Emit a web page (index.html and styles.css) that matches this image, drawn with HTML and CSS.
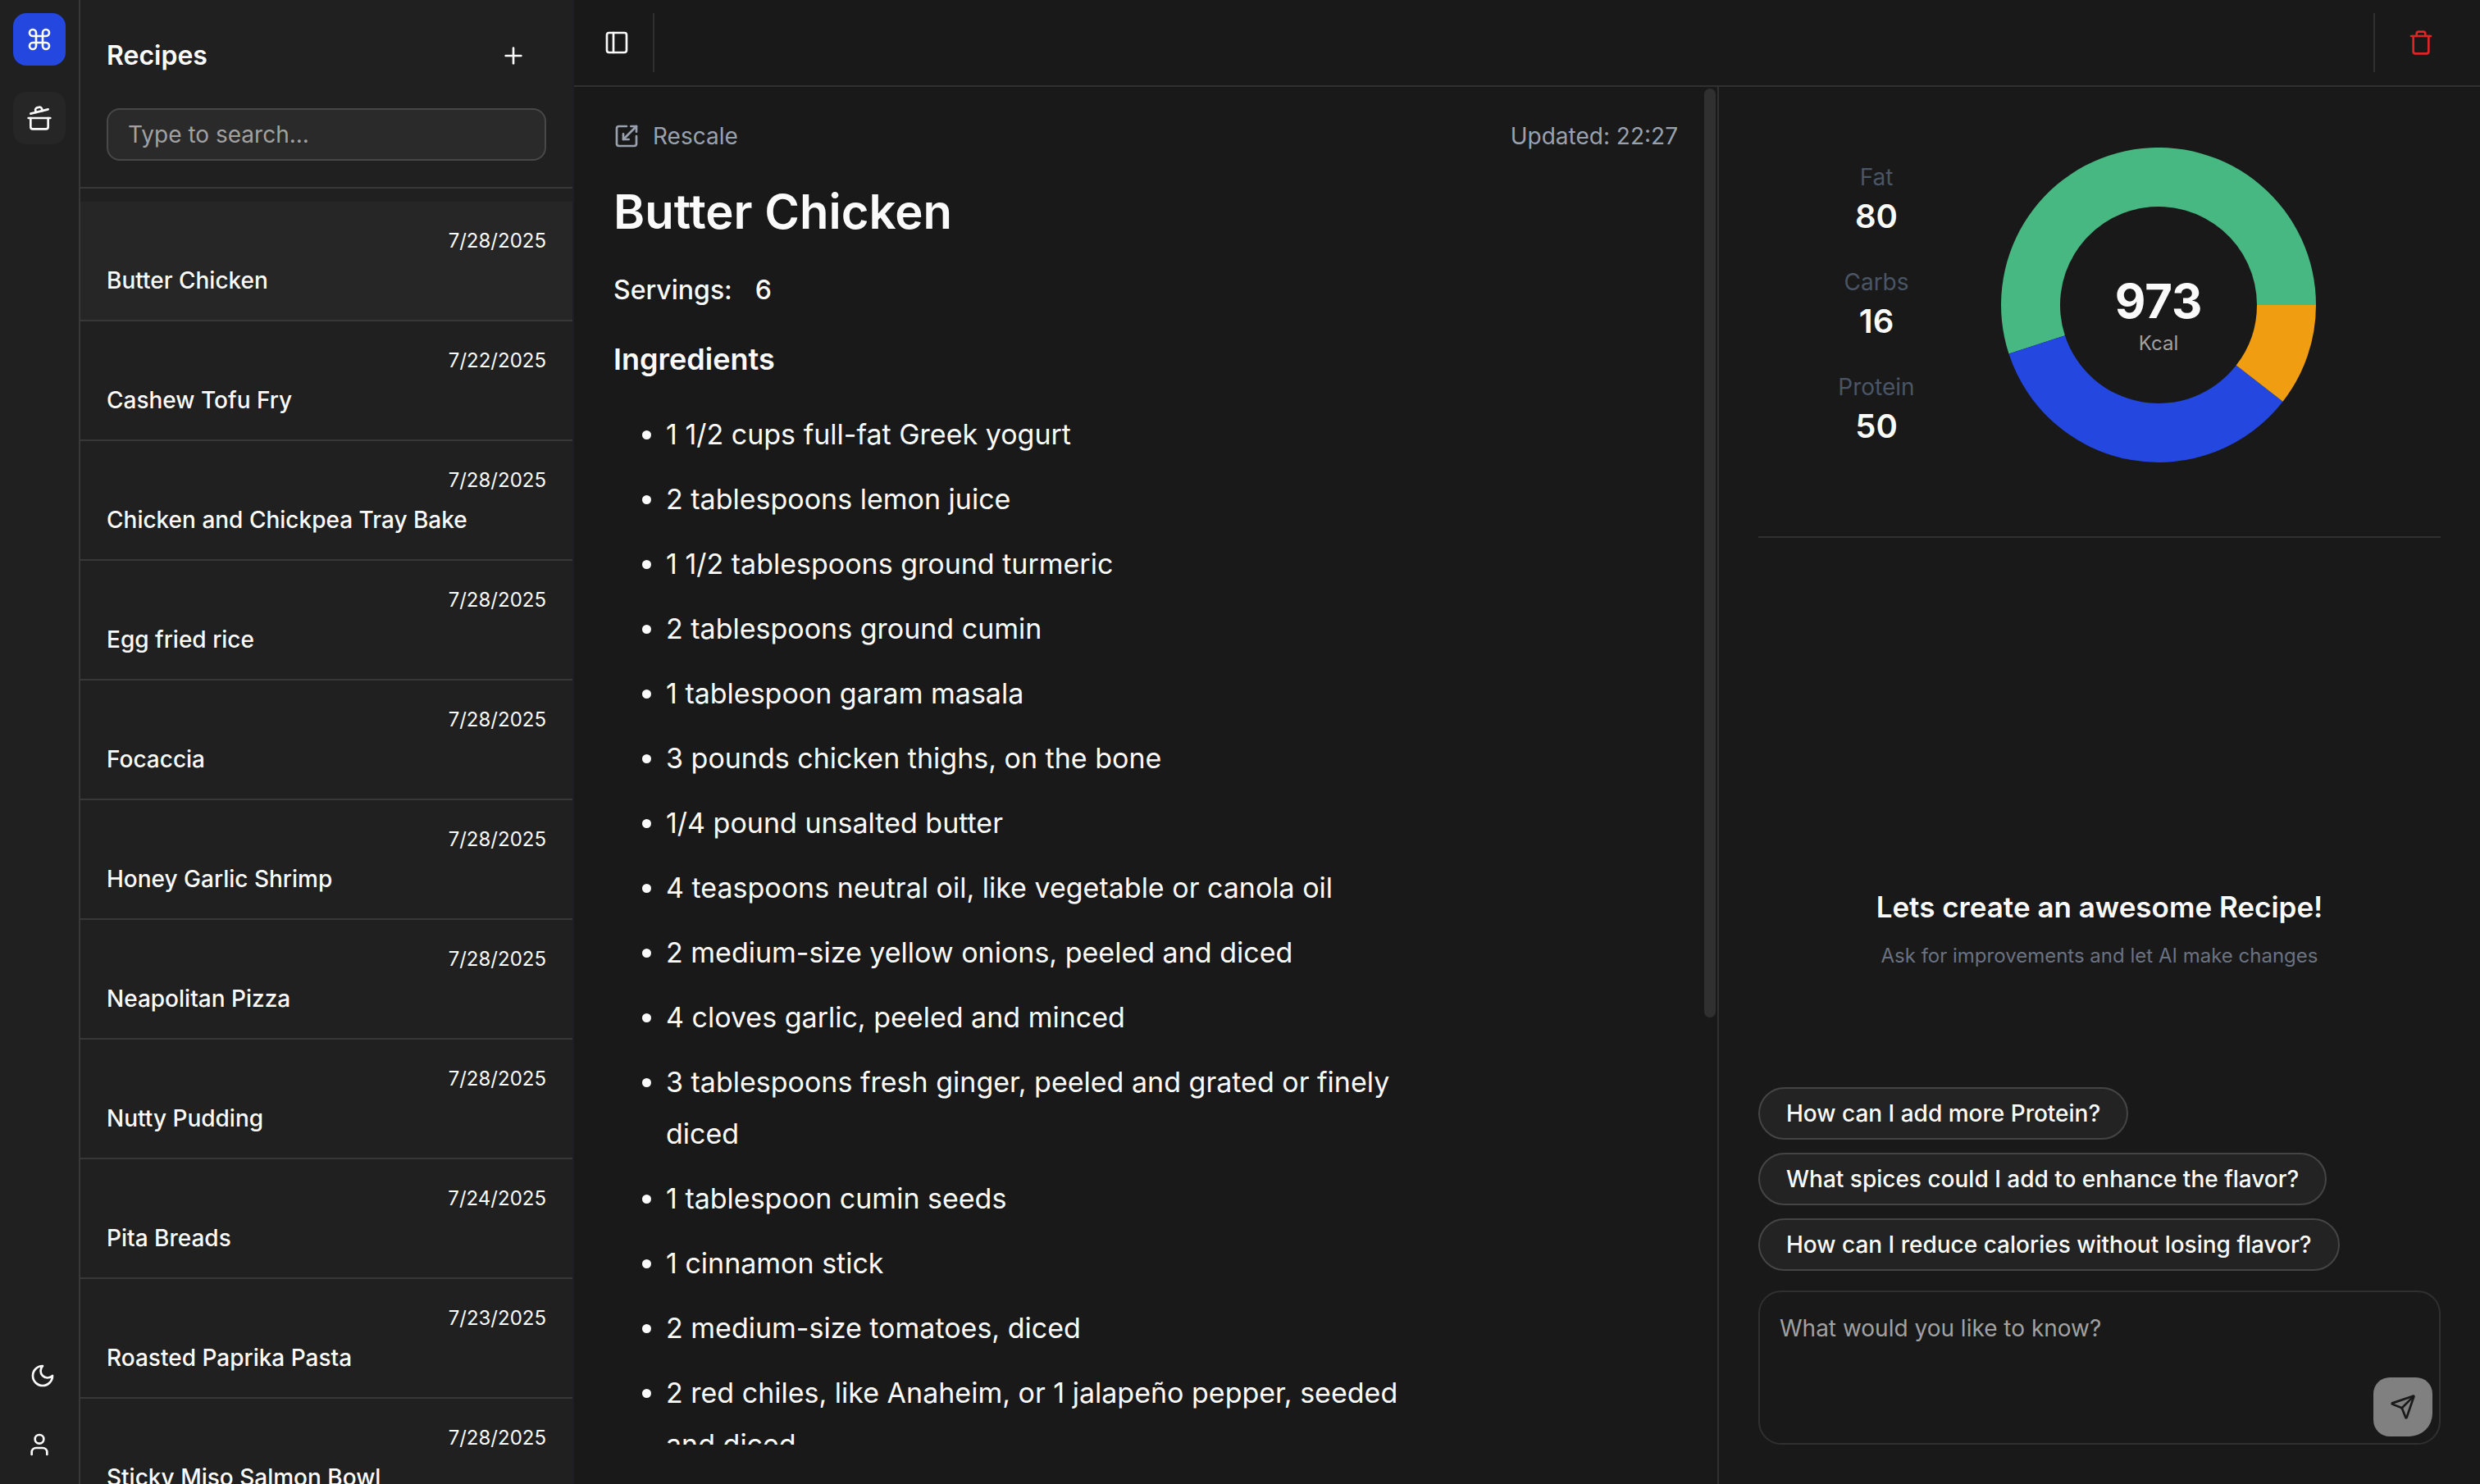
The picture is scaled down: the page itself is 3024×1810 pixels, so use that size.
FILE: index.html
```html
<!DOCTYPE html>
<html lang="en">
<head>
<meta charset="utf-8">
<title>Recipes</title>
<link rel="stylesheet" href="styles.css">
</head>
<body>
<div class="app">
  <nav class="rail" aria-label="Main">
    <a class="rail-logo" href="#" aria-label="Home">
      <svg class="icon" viewBox="0 0 24 24"><path d="M15 6v12a3 3 0 1 0 3-3H6a3 3 0 1 0 3 3V6a3 3 0 1 0-3 3h12a3 3 0 1 0-3-3"/></svg>
    </a>
    <a class="rail-link" href="#" aria-label="Recipes">
      <svg class="icon" viewBox="0 0 24 24"><path d="M2 12h20"/><path d="M20 12v8a2 2 0 0 1-2 2H6a2 2 0 0 1-2-2v-8"/><path d="m4 8 16-4"/><path d="m8.86 6.78-.45-1.81a2 2 0 0 1 1.45-2.43l1.94-.48a2 2 0 0 1 2.43 1.46l.45 1.8"/></svg>
    </a>
    <div class="rail-footer">
      <button class="rail-button rail-theme" type="button" aria-label="Toggle theme">
        <svg class="icon" viewBox="0 0 24 24"><path d="M12 3a6 6 0 0 0 9 9 9 9 0 1 1-9-9Z"/></svg>
      </button>
      <button class="rail-button" type="button" aria-label="Account">
        <svg class="icon" viewBox="0 0 24 24"><path d="M19 21v-2a4 4 0 0 0-4-4H9a4 4 0 0 0-4 4v2"/><circle cx="12" cy="7" r="4"/></svg>
      </button>
    </div>
  </nav>

  <aside class="sidebar">
    <header class="sidebar-header">
      <div class="sidebar-title-row">
        <h2 class="sidebar-title">Recipes</h2>
        <button class="icon-button" type="button" aria-label="New recipe">
          <svg class="icon" viewBox="0 0 24 24"><path d="M5 12h14"/><path d="M12 5v14"/></svg>
        </button>
      </div>
      <input class="search" type="search" placeholder="Type to search..." aria-label="Search recipes">
    </header>
    <div class="recipe-list">
      <a class="recipe recipe-active" href="#"><time class="recipe-date">7/28/2025</time><span class="recipe-name">Butter Chicken</span></a>
      <a class="recipe" href="#"><time class="recipe-date">7/22/2025</time><span class="recipe-name">Cashew Tofu Fry</span></a>
      <a class="recipe" href="#"><time class="recipe-date">7/28/2025</time><span class="recipe-name">Chicken and Chickpea Tray Bake</span></a>
      <a class="recipe" href="#"><time class="recipe-date">7/28/2025</time><span class="recipe-name">Egg fried rice</span></a>
      <a class="recipe" href="#"><time class="recipe-date">7/28/2025</time><span class="recipe-name">Focaccia</span></a>
      <a class="recipe" href="#"><time class="recipe-date">7/28/2025</time><span class="recipe-name">Honey Garlic Shrimp</span></a>
      <a class="recipe" href="#"><time class="recipe-date">7/28/2025</time><span class="recipe-name">Neapolitan Pizza</span></a>
      <a class="recipe" href="#"><time class="recipe-date">7/28/2025</time><span class="recipe-name">Nutty Pudding</span></a>
      <a class="recipe" href="#"><time class="recipe-date">7/24/2025</time><span class="recipe-name">Pita Breads</span></a>
      <a class="recipe" href="#"><time class="recipe-date">7/23/2025</time><span class="recipe-name">Roasted Paprika Pasta</span></a>
      <a class="recipe" href="#"><time class="recipe-date">7/28/2025</time><span class="recipe-name">Sticky Miso Salmon Bowl</span></a>
    </div>
  </aside>

  <div class="workspace">
    <header class="topbar">
      <button class="icon-button" type="button" aria-label="Toggle sidebar">
        <svg class="icon" viewBox="0 0 24 24"><rect width="18" height="18" x="3" y="3" rx="2"/><path d="M9 3v18"/></svg>
      </button>
      <div class="divider"></div>
      <div class="divider divider-end"></div>
      <button class="icon-button icon-button-danger" type="button" aria-label="Delete recipe">
        <svg class="icon" viewBox="0 0 24 24"><path d="M19 6v14a2 2 0 0 1-2 2H7a2 2 0 0 1-2-2V6"/><path d="M3 6h18"/><path d="M8 6V4a2 2 0 0 1 2-2h4a2 2 0 0 1 2 2v2"/></svg>
      </button>
    </header>

    <div class="panes">
      <main class="recipe-pane">
        <article class="recipe-body">
          <div class="meta">
            <button class="rescale" type="button">
              <svg class="icon" viewBox="0 0 24 24"><path d="M12 3H5a2 2 0 0 0-2 2v14a2 2 0 0 0 2 2h14a2 2 0 0 0 2-2v-7"/><path d="M14 15H9v-5"/><path d="M16 3h5v5"/><path d="M21 3 9 15"/></svg>
              Rescale
            </button>
            <span>Updated: 22:27</span>
          </div>
          <h1 class="title">Butter Chicken</h1>
          <p class="servings"><span>Servings:</span><span>6</span></p>
          <h3 class="section-title">Ingredients</h3>
          <ul class="ingredients">
            <li>1 1/2 cups full-fat Greek yogurt</li>
            <li>2 tablespoons lemon juice</li>
            <li>1 1/2 tablespoons ground turmeric</li>
            <li>2 tablespoons ground cumin</li>
            <li>1 tablespoon garam masala</li>
            <li>3 pounds chicken thighs, on the bone</li>
            <li>1/4 pound unsalted butter</li>
            <li>4 teaspoons neutral oil, like vegetable or canola oil</li>
            <li>2 medium-size yellow onions, peeled and diced</li>
            <li>4 cloves garlic, peeled and minced</li>
            <li>3 tablespoons fresh ginger, peeled and grated or finely diced</li>
            <li>1 tablespoon cumin seeds</li>
            <li>1 cinnamon stick</li>
            <li>2 medium-size tomatoes, diced</li>
            <li>2 red chiles, like Anaheim, or 1 jalapeño pepper, seeded and diced</li>
          </ul>
        </article>
        <div class="scrollbar"><div class="scrollbar-thumb"></div></div>
      </main>

      <aside class="assistant">
        <section class="nutrition">
          <dl class="macros">
            <div class="macro"><dt>Fat</dt><dd>80</dd></div>
            <div class="macro"><dt>Carbs</dt><dd>16</dd></div>
            <div class="macro"><dt>Protein</dt><dd>50</dd></div>
          </dl>
          <svg class="donut" viewBox="-192 -192 384 384" role="img" aria-label="Macronutrient split">
            <path class="slice-fat" d="M192 0A192 192 0 1 0 -182.5 59.6L-114.1 37.2A120 120 0 1 1 120 0Z"/>
            <path class="slice-protein" d="M-182.5 59.6A192 192 0 0 0 151.6 117.8L94.7 73.6A120 120 0 0 1 -114.1 37.2Z"/>
            <path class="slice-carbs" d="M151.6 117.8A192 192 0 0 0 192 0L120 0A120 120 0 0 1 94.7 73.6Z"/>
            <text class="donut-value" x="0" y="16">973</text>
            <text class="donut-unit" x="0" y="55">Kcal</text>
          </svg>
        </section>
        <section class="chat-empty">
          <h2 class="chat-title">Lets create an awesome Recipe!</h2>
          <p class="chat-hint">Ask for improvements and let AI make changes</p>
        </section>
        <div class="suggestions">
          <button class="suggestion" type="button">How can I add more Protein?</button>
          <button class="suggestion" type="button">What spices could I add to enhance the flavor?</button>
          <button class="suggestion" type="button">How can I reduce calories without losing flavor?</button>
        </div>
        <form class="composer">
          <textarea class="composer-input" placeholder="What would you like to know?" aria-label="Message"></textarea>
          <button class="send" type="button" aria-label="Send">
            <svg class="icon" viewBox="0 0 24 24"><path d="M14.536 21.686a.5.5 0 0 0 .937-.024l6.5-19a.496.496 0 0 0-.635-.635l-19 6.5a.5.5 0 0 0-.024.937l7.93 3.18a2 2 0 0 1 1.112 1.11z"/><path d="m21.854 2.147-10.94 10.939"/></svg>
          </button>
        </form>
      </aside>
    </div>
  </div>
</div>
</body>
</html>
```
FILE: styles.css
```css
:root {
  --bg: #191919;
  --sidebar: #202020;
  --accent: #262626;
  --border: #303030;
  --sidebar-border: #383838;
  --text: #fafafa;
  --muted: #a1a1a1;
  --gray: #99a1af;
  --gray-dark: #4a5565;
}

*,
*::before,
*::after {
  box-sizing: border-box;
}

body,
h1,
h2,
h3,
p,
ul,
dl,
dd {
  margin: 0;
}

body {
  background: var(--bg);
  color: var(--text);
  font-family: Inter, "Liberation Sans", sans-serif;
  font-size: 28px;
  line-height: 40px;
}

button,
input,
textarea {
  font: inherit;
  color: inherit;
  border: 0;
  padding: 0;
  background: none;
}

a {
  color: inherit;
  text-decoration: none;
}

.app {
  display: flex;
  height: 100vh;
  overflow: hidden;
}

.icon {
  display: block;
  flex: none;
  width: 32px;
  height: 32px;
  fill: none;
  stroke: currentColor;
  stroke-width: 2;
  stroke-linecap: round;
  stroke-linejoin: round;
}

.icon-button {
  display: grid;
  place-items: center;
  width: 56px;
  height: 56px;
}

.icon-button-danger {
  color: #dc2626;
}

/* Icon rail */

.rail {
  flex: none;
  display: flex;
  flex-direction: column;
  gap: 32px;
  width: 98px;
  padding: 16px;
  background: var(--sidebar);
  border-right: 2px solid var(--sidebar-border);
}

.rail-logo,
.rail-link,
.rail-button {
  display: grid;
  place-items: center;
  width: 64px;
  height: 64px;
  border-radius: 16px;
}

.rail-logo {
  background: #2347df;
}

.rail-link {
  background: var(--accent);
}

.rail-footer {
  display: flex;
  flex-direction: column;
  gap: 20px;
  margin-top: auto;
}

.rail-theme {
  width: 72px;
}

/* Recipe list */

.sidebar {
  flex: none;
  display: flex;
  flex-direction: column;
  width: 602px;
  background: var(--sidebar);
  border-right: 2px solid #1c1d28;
  overflow: hidden;
}

.sidebar-header {
  flex: none;
  display: flex;
  flex-direction: column;
  gap: 28px;
  padding: 32px;
  border-bottom: 2px solid var(--sidebar-border);
}

.sidebar-title-row {
  display: flex;
  align-items: center;
  justify-content: space-between;
  height: 72px;
  padding-right: 12px;
}

.sidebar-title {
  font-size: 32px;
  font-weight: 600;
}

.search {
  width: 100%;
  height: 64px;
  padding: 0 24px;
  background: #2a2a2a;
  border: 2px solid #484848;
  border-radius: 16px;
}

.search::placeholder,
.composer-input::placeholder {
  color: var(--muted);
  opacity: 1;
}

.recipe-list {
  padding-top: 16px;
}

.recipe {
  display: flex;
  flex-direction: column;
  gap: 16px;
  padding: 32px;
  line-height: 32px;
  border-bottom: 2px solid var(--sidebar-border);
}

.recipe-active {
  background: var(--accent);
}

.recipe-date {
  align-self: flex-end;
  font-size: 24px;
}

.recipe-name {
  font-weight: 500;
}

/* Workspace */

.workspace {
  flex: 1;
  display: flex;
  flex-direction: column;
  min-width: 0;
}

.topbar {
  flex: none;
  display: flex;
  align-items: center;
  gap: 16px;
  height: 106px;
  padding: 16px 44px 16px 24px;
  border-bottom: 2px solid var(--border);
}

.divider {
  align-self: stretch;
  width: 2px;
  background: var(--border);
}

.divider-end {
  margin-left: auto;
  margin-right: 12px;
}

.panes {
  flex: 1;
  display: grid;
  grid-template-columns: 1fr 928px;
  min-height: 0;
}

.recipe-pane {
  position: relative;
  display: flex;
  min-width: 0;
  min-height: 0;
  border-right: 2px solid var(--border);
}

.recipe-body {
  flex: 1;
  margin: 0 48px 48px;
  padding-top: 40px;
  overflow: hidden;
}

/* Overlay scrollbar on the right edge of the recipe */
.scrollbar {
  position: absolute;
  top: 0;
  right: 0;
  bottom: 0;
  padding: 2px;
}

.scrollbar-thumb {
  width: 14px;
  height: calc(200% / 3);
  border-radius: 7px;
  background: #303030;
}

.meta {
  display: flex;
  justify-content: space-between;
  color: var(--gray);
}

.rescale {
  display: flex;
  align-items: center;
  gap: 16px;
}

.title {
  margin-top: 36px;
  font-size: 58px;
  line-height: 72px;
  font-weight: 600;
}

.servings {
  display: flex;
  gap: 28px;
  margin-top: 40px;
  font-size: 32px;
  font-weight: 500;
}

.section-title {
  margin-top: 40px;
  font-size: 36px;
  line-height: 48px;
  font-weight: 600;
}

.ingredients {
  display: grid;
  gap: 16px;
  max-width: 1000px;
  margin-top: 36px;
  padding-left: 64px;
  font-size: 34px;
  line-height: 63px;
}

/* Assistant */

.assistant {
  display: flex;
  flex-direction: column;
  min-width: 0;
  padding: 0 48px 48px;
}

.nutrition {
  display: grid;
  grid-template-columns: 288px 400px;
  align-items: center;
  height: 550px;
  padding-bottom: 16px;
  border-bottom: 2px solid var(--border);
}

.macros {
  display: flex;
  flex-direction: column;
  gap: 32px;
  text-align: center;
}

.macro dt {
  color: var(--gray-dark);
}

.macro dd {
  font-size: 40px;
  line-height: 56px;
  font-weight: 600;
}

.donut {
  justify-self: center;
  width: 384px;
  height: 384px;
}

.slice-fat {
  fill: #47b881;
}

.slice-protein {
  fill: #2347df;
}

.slice-carbs {
  fill: #f09d11;
}

.donut-value,
.donut-unit {
  text-anchor: middle;
}

.donut-value {
  fill: var(--text);
  font-size: 58px;
  font-weight: 700;
}

.donut-unit {
  fill: var(--muted);
  font-size: 24px;
}

.chat-empty {
  flex: 1;
  display: flex;
  flex-direction: column;
  justify-content: flex-end;
  gap: 12px;
  padding-bottom: 140px;
  text-align: center;
}

.chat-title {
  font-size: 35px;
  line-height: 56px;
  font-weight: 600;
}

.chat-hint {
  font-size: 24px;
  line-height: 40px;
  color: #6a7282;
}

.suggestions {
  display: flex;
  flex-direction: column;
  align-items: flex-start;
  gap: 16px;
}

.suggestion {
  height: 64px;
  padding: 0 32px;
  background: #232323;
  border: 2px solid #454545;
  border-radius: 32px;
  font-weight: 500;
}

.composer {
  display: flex;
  align-items: flex-end;
  height: 188px;
  margin-top: 24px;
  padding: 8px;
  border: 2px solid var(--border);
  border-radius: 28px;
}

.composer-input {
  flex: 1;
  height: 100%;
  padding: 16px;
  resize: none;
}

.send {
  flex: none;
  display: grid;
  place-items: center;
  width: 72px;
  height: 72px;
  border-radius: 20px 20px 28px 20px;
  background: #808080;
  color: var(--bg);
}
```
